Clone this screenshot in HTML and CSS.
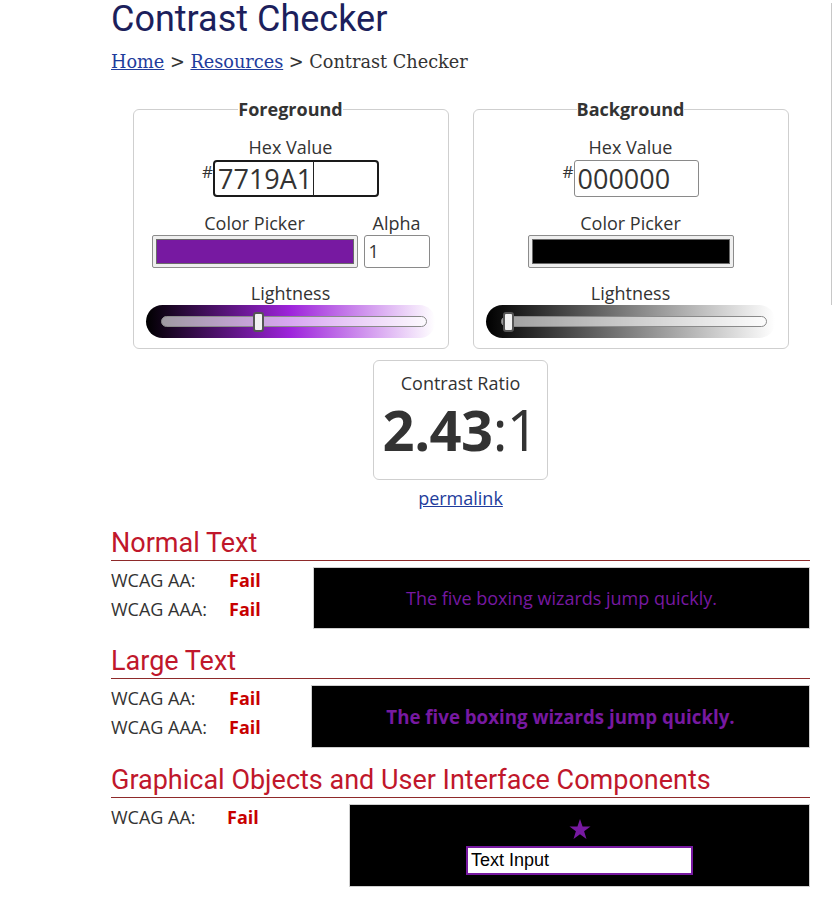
FILE: index.html
```html
<!DOCTYPE html>
<html lang="en">
<head>
<meta charset="utf-8">
<title>Contrast Checker</title>
<link rel="stylesheet" href="styles.css">
</head>
<body>
<div class="edge-line"></div>
<main class="page">
  <h1 class="title">Contrast Checker</h1>
  <nav class="crumbs"><a href="#">Home</a> &gt; <a href="#">Resources</a> &gt; Contrast Checker</nav>

  <div class="pickers">
    <fieldset class="panel">
      <legend>Foreground</legend>
      <div class="lbl">Hex Value</div>
      <div class="hex-row">
        <span class="hash">#</span>
        <div class="hex-input focused"><span>7719A1</span><span class="caret"></span></div>
      </div>
      <div class="pick-row">
        <div class="col">
          <div class="lbl">Color Picker</div>
          <div class="swatch"><div class="swatch-in fg"></div></div>
        </div>
        <div class="col">
          <div class="lbl">Alpha</div>
          <div class="alpha">1</div>
        </div>
      </div>
      <div class="lbl gap">Lightness</div>
      <div class="slider fg-grad">
        <div class="track"></div>
        <div class="thumb" style="left:107px"></div>
      </div>
    </fieldset>

    <fieldset class="panel">
      <legend>Background</legend>
      <div class="lbl">Hex Value</div>
      <div class="hex-row">
        <span class="hash">#</span>
        <div class="hex-input"><span>000000</span></div>
      </div>
      <div class="pick-row">
        <div class="col">
          <div class="lbl">Color Picker</div>
          <div class="swatch"><div class="swatch-in bg"></div></div>
        </div>
      </div>
      <div class="lbl gap">Lightness</div>
      <div class="slider bg-grad">
        <div class="track"></div>
        <div class="thumb" style="left:17px"></div>
      </div>
    </fieldset>
  </div>

  <div class="ratio-wrap">
    <div class="ratio">
      <div class="lbl">Contrast Ratio</div>
      <div class="ratio-val"><b>2.43</b>:1</div>
    </div>
    <a class="permalink" href="#">permalink</a>
  </div>

  <section class="sec">
    <h2>Normal Text</h2>
    <div class="sec-body normal">
      <div class="results">
        <span>WCAG AA:</span><span class="fail">Fail</span>
        <span>WCAG AAA:</span><span class="fail">Fail</span>
      </div>
      <div class="preview p-normal">The five boxing wizards jump quickly.</div>
    </div>
  </section>

  <section class="sec">
    <h2>Large Text</h2>
    <div class="sec-body large">
      <div class="results">
        <span>WCAG AA:</span><span class="fail">Fail</span>
        <span>WCAG AAA:</span><span class="fail">Fail</span>
      </div>
      <div class="preview p-large">The five boxing wizards jump quickly.</div>
    </div>
  </section>

  <section class="sec">
    <h2>Graphical Objects and User Interface Components</h2>
    <div class="sec-body graphic">
      <div class="results g">
        <span>WCAG AA:</span><span class="fail">Fail</span>
      </div>
      <div class="preview p-graphic">
        <svg class="star" width="22" height="21" viewBox="0 0 24 23"><polygon points="12,0 14.8,8.3 23.5,8.3 16.5,13.5 19.1,22 12,16.8 4.9,22 7.5,13.5 0.5,8.3 9.2,8.3" fill="#7719A1"/></svg>
        <div class="text-input">Text Input</div>
      </div>
    </div>
  </section>
</main>
</body>
</html>
```

FILE: styles.css
```css
* { box-sizing: border-box; }
html, body { margin: 0; padding: 0; background: #fff; }
body {
  font-family: "Open Sans", "Noto Sans", sans-serif;
  color: #333;
  font-size: 18px;
  position: relative;
  min-height: 901px;
}
.edge-line {
  position: absolute;
  left: 831px;
  top: 3px;
  width: 1px;
  height: 302px;
  background: #c8c8c8;
}
.page {
  margin-left: 111px;
  width: 699px;
}
.title {
  margin: 0;
  font-family: Roboto, sans-serif;
  font-weight: 400;
  font-size: 36px;
  line-height: 38px;
  color: #1c1f5c;
}
.crumbs {
  margin-top: 12px;
  font-family: "DejaVu Serif", serif;
  font-size: 17.7px;
  line-height: 24px;
  color: #333;
}
.crumbs a { color: #1e3c9c; }

.pickers {
  display: flex;
  justify-content: center;
  gap: 24px;
  margin-top: 23px;
}
.panel {
  margin: 0;
  width: 316px;
  border: 1px solid #cfcfcf;
  border-radius: 6px;
  padding: 14px 0 10px;
  display: flex;
  flex-direction: column;
  align-items: center;
  min-inline-size: 0;
}
.panel legend {
  margin: 0 auto;
  padding: 0;
  font-weight: 700;
  font-size: 18px;
  line-height: 24px;
  color: #333;
}
.lbl {
  font-size: 18px;
  line-height: 24px;
  text-align: center;
  color: #333;
}
.lbl.gap { margin-top: 13px; }
.hex-row {
  display: flex;
  align-items: flex-start;
  margin-top: 1px;
}
.hash {
  font-size: 17px;
  line-height: 20px;
  margin-top: 2px;
  width: 11px;
}
.hex-input {
  width: 125px;
  height: 37px;
  border: 1px solid #8a8a8a;
  border-radius: 3px;
  font-size: 27px;
  line-height: 35px;
  padding-left: 3px;
  display: flex;
  align-items: center;
  color: #333;
}
.hex-input.focused {
  width: 166px;
  border: 2px solid #1a1a1a;
  border-radius: 4px;
  padding-left: 3px;
}
.caret {
  width: 1px;
  height: 35px;
  background: #222;
  margin-left: 1px;
}
.pick-row {
  display: flex;
  gap: 6px;
  margin-top: 14px;
}
.col { display: flex; flex-direction: column; align-items: center; }
.swatch {
  width: 206px;
  height: 33px;
  border: 1px solid #8c8c8c;
  border-radius: 2px;
  background: #efefef;
  padding: 3px 3px;
}
.swatch-in {
  width: 100%;
  height: 100%;
  border: 1px solid #6a6a6a;
}
.swatch-in.fg { background: #7719A1; }
.swatch-in.bg { background: #000; }
.alpha {
  width: 66px;
  height: 33px;
  border: 1px solid #8a8a8a;
  border-radius: 3px;
  font-size: 18px;
  line-height: 31px;
  padding-left: 4px;
}
.slider {
  position: relative;
  width: 289px;
  height: 33px;
  border-radius: 17px 16px 16px 17px;
}
.fg-grad { background: linear-gradient(to right, hsl(280,72%,0%), hsl(280,72%,50%) 50%, hsl(280,72%,100%)); }
.bg-grad { background: linear-gradient(to right, #000, #808080 50%, #fff); }
.track {
  position: absolute;
  left: 15px;
  right: 8px;
  top: 11px;
  height: 11px;
  border-radius: 6px;
  border: 1px solid #8a8a8a;
  background: rgba(255,255,255,0.6);
}
.thumb {
  position: absolute;
  top: 7px;
  width: 11px;
  height: 20px;
  border: 2px solid #555;
  border-radius: 3px;
  background: #f2f2f2;
}

.ratio-wrap {
  display: flex;
  flex-direction: column;
  align-items: center;
  margin-top: 11px;
}
.ratio {
  width: 175px;
  height: 120px;
  border: 1px solid #cfcfcf;
  border-radius: 6px;
  padding-top: 10px;
  display: flex;
  flex-direction: column;
  align-items: center;
}
.ratio-val {
  font-size: 56px;
  line-height: 60px;
  margin-top: 4px;
  color: #333;
  letter-spacing: -0.5px;
}
.ratio-val b { font-weight: 700; }
.permalink {
  margin-top: 6px;
  font-size: 18px;
  line-height: 24px;
  color: #1e3c9c;
}

.sec h2 {
  margin: 0;
  font-family: Roboto, sans-serif;
  font-weight: 400;
  font-size: 27px;
  line-height: 34px;
  color: #c0172b;
  border-bottom: 1px solid #8e2a2a;
}
.sec { margin-top: 15px; }
.sec:first-of-type { margin-top: 16px; }
.sec-body {
  display: flex;
  align-items: flex-start;
}
.results {
  display: grid;
  grid-template-columns: 118px auto;
  align-content: start;
  font-size: 18px;
  line-height: 29px;
  padding-top: 5px;
}
.results.g { grid-template-columns: 116px auto; }
.normal .results { width: 202px; }
.large .results { width: 200px; }
.graphic .results { width: 238px; }
.fail { color: #c80000; font-weight: 700; }
.preview {
  flex: 1;
  background: #000;
  border: 1px solid #cfcfcf;
  margin-top: 6px;
  color: #7719A1;
  display: flex;
  align-items: center;
  justify-content: center;
}
.p-normal { height: 62px; font-size: 18px; }
.p-large { height: 63px; font-size: 18.7px; font-weight: 700; }
.p-graphic {
  height: 83px;
  flex-direction: column;
  justify-content: flex-start;
  padding-top: 14px;
}
.star { display: block; }
.text-input {
  margin-top: 6px;
  width: 227px;
  height: 29px;
  background: #fff;
  border: 2px solid #7719A1;
  font-family: "Liberation Sans", Arial, sans-serif;
  font-size: 18px;
  line-height: 25px;
  color: #000;
  padding-left: 3px;
}
```
